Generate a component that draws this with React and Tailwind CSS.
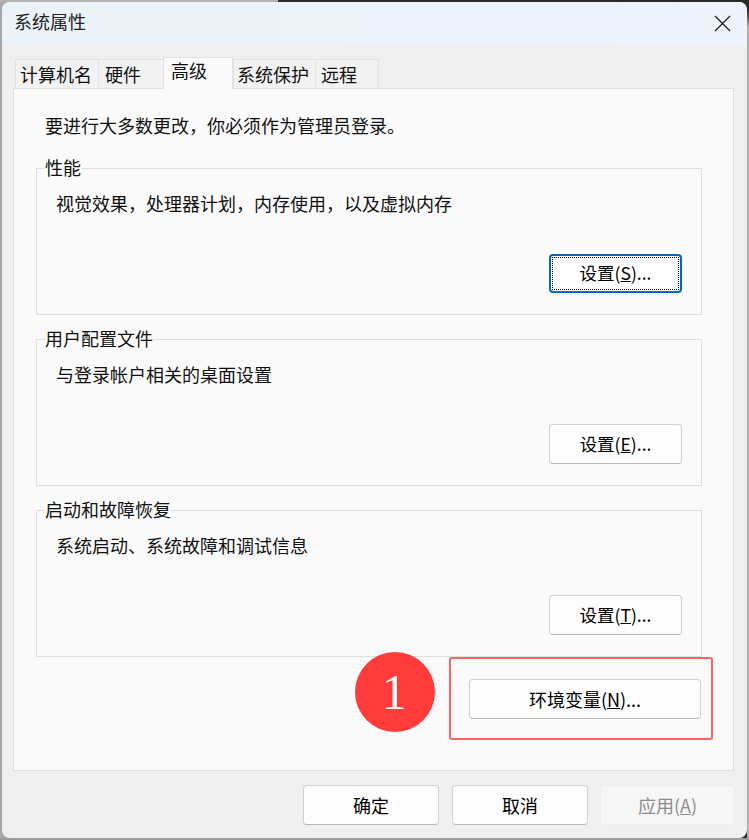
import React from 'react';

const font = { cjk: "font-['Noto_Sans_CJK_SC','Noto_Sans',sans-serif]" };

const Btn = ({ children, className = '' }) => (
  <button className={`flex items-center justify-center bg-[#fdfdfd] border border-[#d0d0d0] border-b-[#b8b8b8] rounded-[4px] text-[18px] text-black ${className}`}>
    {children}
  </button>
);

const Group = ({ title, text, hotkey, focused, className = '' }) => (
  <div className={`relative h-[147px] border border-[#dfdfdf] ${className}`}>
    <span className="absolute left-[8px] top-[-14px] bg-[#fafafa] text-[18px] leading-[24px] text-[#111]">{title}</span>
    <p className="pl-[19px] pt-[21px] text-[18px] leading-[26px] text-[#111]">{text}</p>
    <div className="absolute right-[19px] bottom-[21px]">
      {focused ? (
        <div className="w-[133px] h-[39px] rounded-[4px] border-2 border-[#0067c0] bg-white p-[1px]">
          <div className="w-full h-full border border-dotted border-black flex items-center justify-center text-[17.5px] text-black">
            设置(<u>{hotkey}</u>)...
          </div>
        </div>
      ) : (
        <Btn className="w-[133px] h-[40px]">
          <span className="text-[17.5px]">设置(<u>{hotkey}</u>)...</span>
        </Btn>
      )}
    </div>
  </div>
);

const tabs = [
  { label: '计算机名', w: 'w-[83px]', pl: 'pl-[4px]' },
  { label: '硬件', w: 'w-[65px]', pl: 'pl-[6px]' },
  { label: '高级', w: 'w-[70px]', pl: 'pl-[7px]', active: true },
  { label: '系统保护', w: 'w-[82px]', pl: 'pl-[3px]' },
  { label: '远程', w: 'w-[64px]', pl: 'pl-[5px]' },
];

export default function App() {
  return (
    <div className={`w-[749px] h-[840px] overflow-hidden bg-[#a8a8a8] ${font.cjk}`}>
      <div className="flex h-[2px]">
        <div className="w-[278px] bg-[#b4b4b4]" />
        <div className="flex-1 bg-[#2b2b2b]" />
      </div>
      <div className="flex h-[836px] bg-gradient-to-r from-[#a8a8a8] from-50% to-[#2b2b2b] to-50%">
        <div className="w-[2px] bg-[#a8a8a8]" />
        <div className="w-[745px] flex flex-col rounded-[8px] overflow-hidden bg-[#f0f0f0]">
          <div className="h-[43px] shrink-0 flex items-center justify-between pl-[12px] pr-[16px] bg-gradient-to-r from-[#eaf3f8] to-[#eef3fc]">
            <span className="mb-[6px] text-[18px] leading-[24px] text-[#222]">系统属性</span>
            <svg width="17" height="17" viewBox="0 0 17 17" fill="none" stroke="#1a1a1a" strokeWidth="1.2">
              <path d="M1 1L16 16M16 1L1 16" />
            </svg>
          </div>
          <div className="flex pl-[13px] pt-[12px] h-[43px] shrink-0 items-end relative z-10">
            {tabs.map((t) => (
              <div
                key={t.label}
                className={`${t.w} ${t.pl} border border-[#e2e2e2] text-[18px] leading-[24px] text-[#111] ${
                  t.active
                    ? 'h-[32px] bg-[#fafafa] border-b-0 mb-[-1px]'
                    : 'h-[29px] bg-[#f2f2f2] border-b-0 border-r-0 last:border-r pt-[2px]'
                }`}
              >
                {t.label}
              </div>
            ))}
          </div>
          <div className="ml-[11px] w-[721px] h-[683px] shrink-0 bg-[#fafafa] border border-[#e0e0e0] px-[22px]">
            <p className="pt-[24px] pl-[9px] text-[18px] leading-[24px] text-[#111]">要进行大多数更改，你必须作为管理员登录。</p>
            <div className="pt-[31px] flex flex-col gap-[24px] w-[666px]">
              <Group title="性能" text="视觉效果，处理器计划，内存使用，以及虚拟内存" hotkey="S" focused />
              <Group title="用户配置文件" text="与登录帐户相关的桌面设置" hotkey="E" />
              <Group title="启动和故障恢复" text="系统启动、系统故障和调试信息" hotkey="T" />
            </div>
            <div className="flex items-start mt-[-5px] ml-[319px]">
              <div className="relative z-10 shrink-0 w-[80px] h-[80px] rounded-full bg-[#ff3b3b] flex items-center justify-center pr-[2px] font-['Liberation_Serif',serif] text-[50px] text-white">
                1
              </div>
              <div className="shrink-0 ml-[14px] mt-[5px] w-[264px] h-[83px] border-2 border-[#f96464] rounded-[3px] pl-[18px] pt-[20px]">
                <Btn className="w-[232px] h-[40px]">环境变量(<u>N</u>)...</Btn>
              </div>
            </div>
          </div>
          <div className="flex pl-[301px] pt-[14px] gap-[13px]">
            <Btn className="w-[136px] h-[40px]">确定</Btn>
            <Btn className="w-[136px] h-[40px]">取消</Btn>
            <button className="w-[135px] h-[40px] ml-[-1px] rounded-[4px] border border-[#ececec] bg-[#f6f6f6] text-[18px] text-[#8c8c8c]">
              应用(<u>A</u>)
            </button>
          </div>
        </div>
        <div className="w-[2px] bg-gradient-to-b from-[#2b2b2b] from-1% via-[#b0b0b0] via-3% to-[#b0b0b0]" />
      </div>
      <div className="h-[2px] bg-[#9c9c9c]" />
    </div>
  );
}
